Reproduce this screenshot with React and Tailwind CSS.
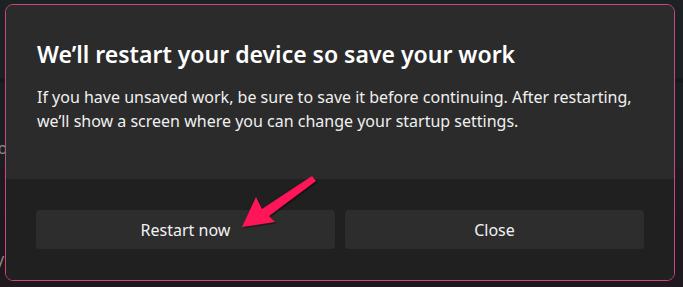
import React from 'react';

const RestartArrow = () => (
  <svg
    className="absolute left-0 top-0 pointer-events-none"
    width="683"
    height="287"
    viewBox="0 0 683 287"
  >
    <polygon
      points="242,227 256,197 262,209 312,176 316,181 269,216 275,222"
      fill="#000"
      opacity="0.35"
      transform="translate(1.5,1.5)"
    />
    <polygon
      points="242,227 256,197 262,209 312,176 316,181 269,216 275,222"
      fill="#ff1558"
    />
  </svg>
);

const App = () => {
  return (
    <div
      className="relative w-[683px] h-[287px] overflow-hidden bg-[#1b1d1f] text-white"
      style={{ fontFamily: '"Noto Sans", "Open Sans", sans-serif' }}
    >
      {/* page behind the dialog */}
      <div className="flex flex-col h-full">
        <div className="h-[78px] bg-[#1e2123] flex items-center">
          <span className="-ml-[24px] mt-[-4px] text-[16px] text-[#9a9a9a]">ver</span>
        </div>
        <div className="h-[5px] bg-[#161819]" />
        <div className="h-[85px] bg-[#1c1f21] flex items-end">
          <span className="-ml-[10px] mb-[8px] text-[16px] text-[#8a8a8a]">co</span>
        </div>
        <div className="h-[42px] bg-[#1e1a1f]" />
        <div className="flex-1 bg-[#1f181e] flex items-end">
          <span className="-ml-[4px] mb-[16px] text-[16px] text-[#8a8a8a]">y</span>
        </div>
      </div>

      {/* dialog */}
      <div className="absolute left-[5px] top-[4px] w-[670px] h-[277px] rounded-[8px] border border-[#c44c79] overflow-hidden flex flex-col">
        <div className="h-[174px] bg-[#2b2b2b] px-[31px] pt-[34px]">
          <h1 className="text-[23px] leading-[30px] font-semibold">
            We’ll restart your device so save your work
          </h1>
          <p className="mt-[16px] text-[16px] leading-[24px] text-[#f0f0f0]">
            If you have unsaved work, be sure to save it before continuing. After restarting,
            <br />
            we’ll show a screen where you can change your startup settings.
          </p>
        </div>
        <div className="flex-1 bg-[#202020] px-[30px] pt-[31px] flex gap-[10px]">
          <button className="flex-1 h-[39px] rounded-[4px] bg-[#2d2d2d] text-[16px] text-[#f2f2f2]">
            Restart now
          </button>
          <button className="flex-1 h-[39px] rounded-[4px] bg-[#2d2d2d] text-[16px] text-[#f2f2f2]">
            Close
          </button>
        </div>
      </div>

      <RestartArrow />
    </div>
  );
};

export default App;
